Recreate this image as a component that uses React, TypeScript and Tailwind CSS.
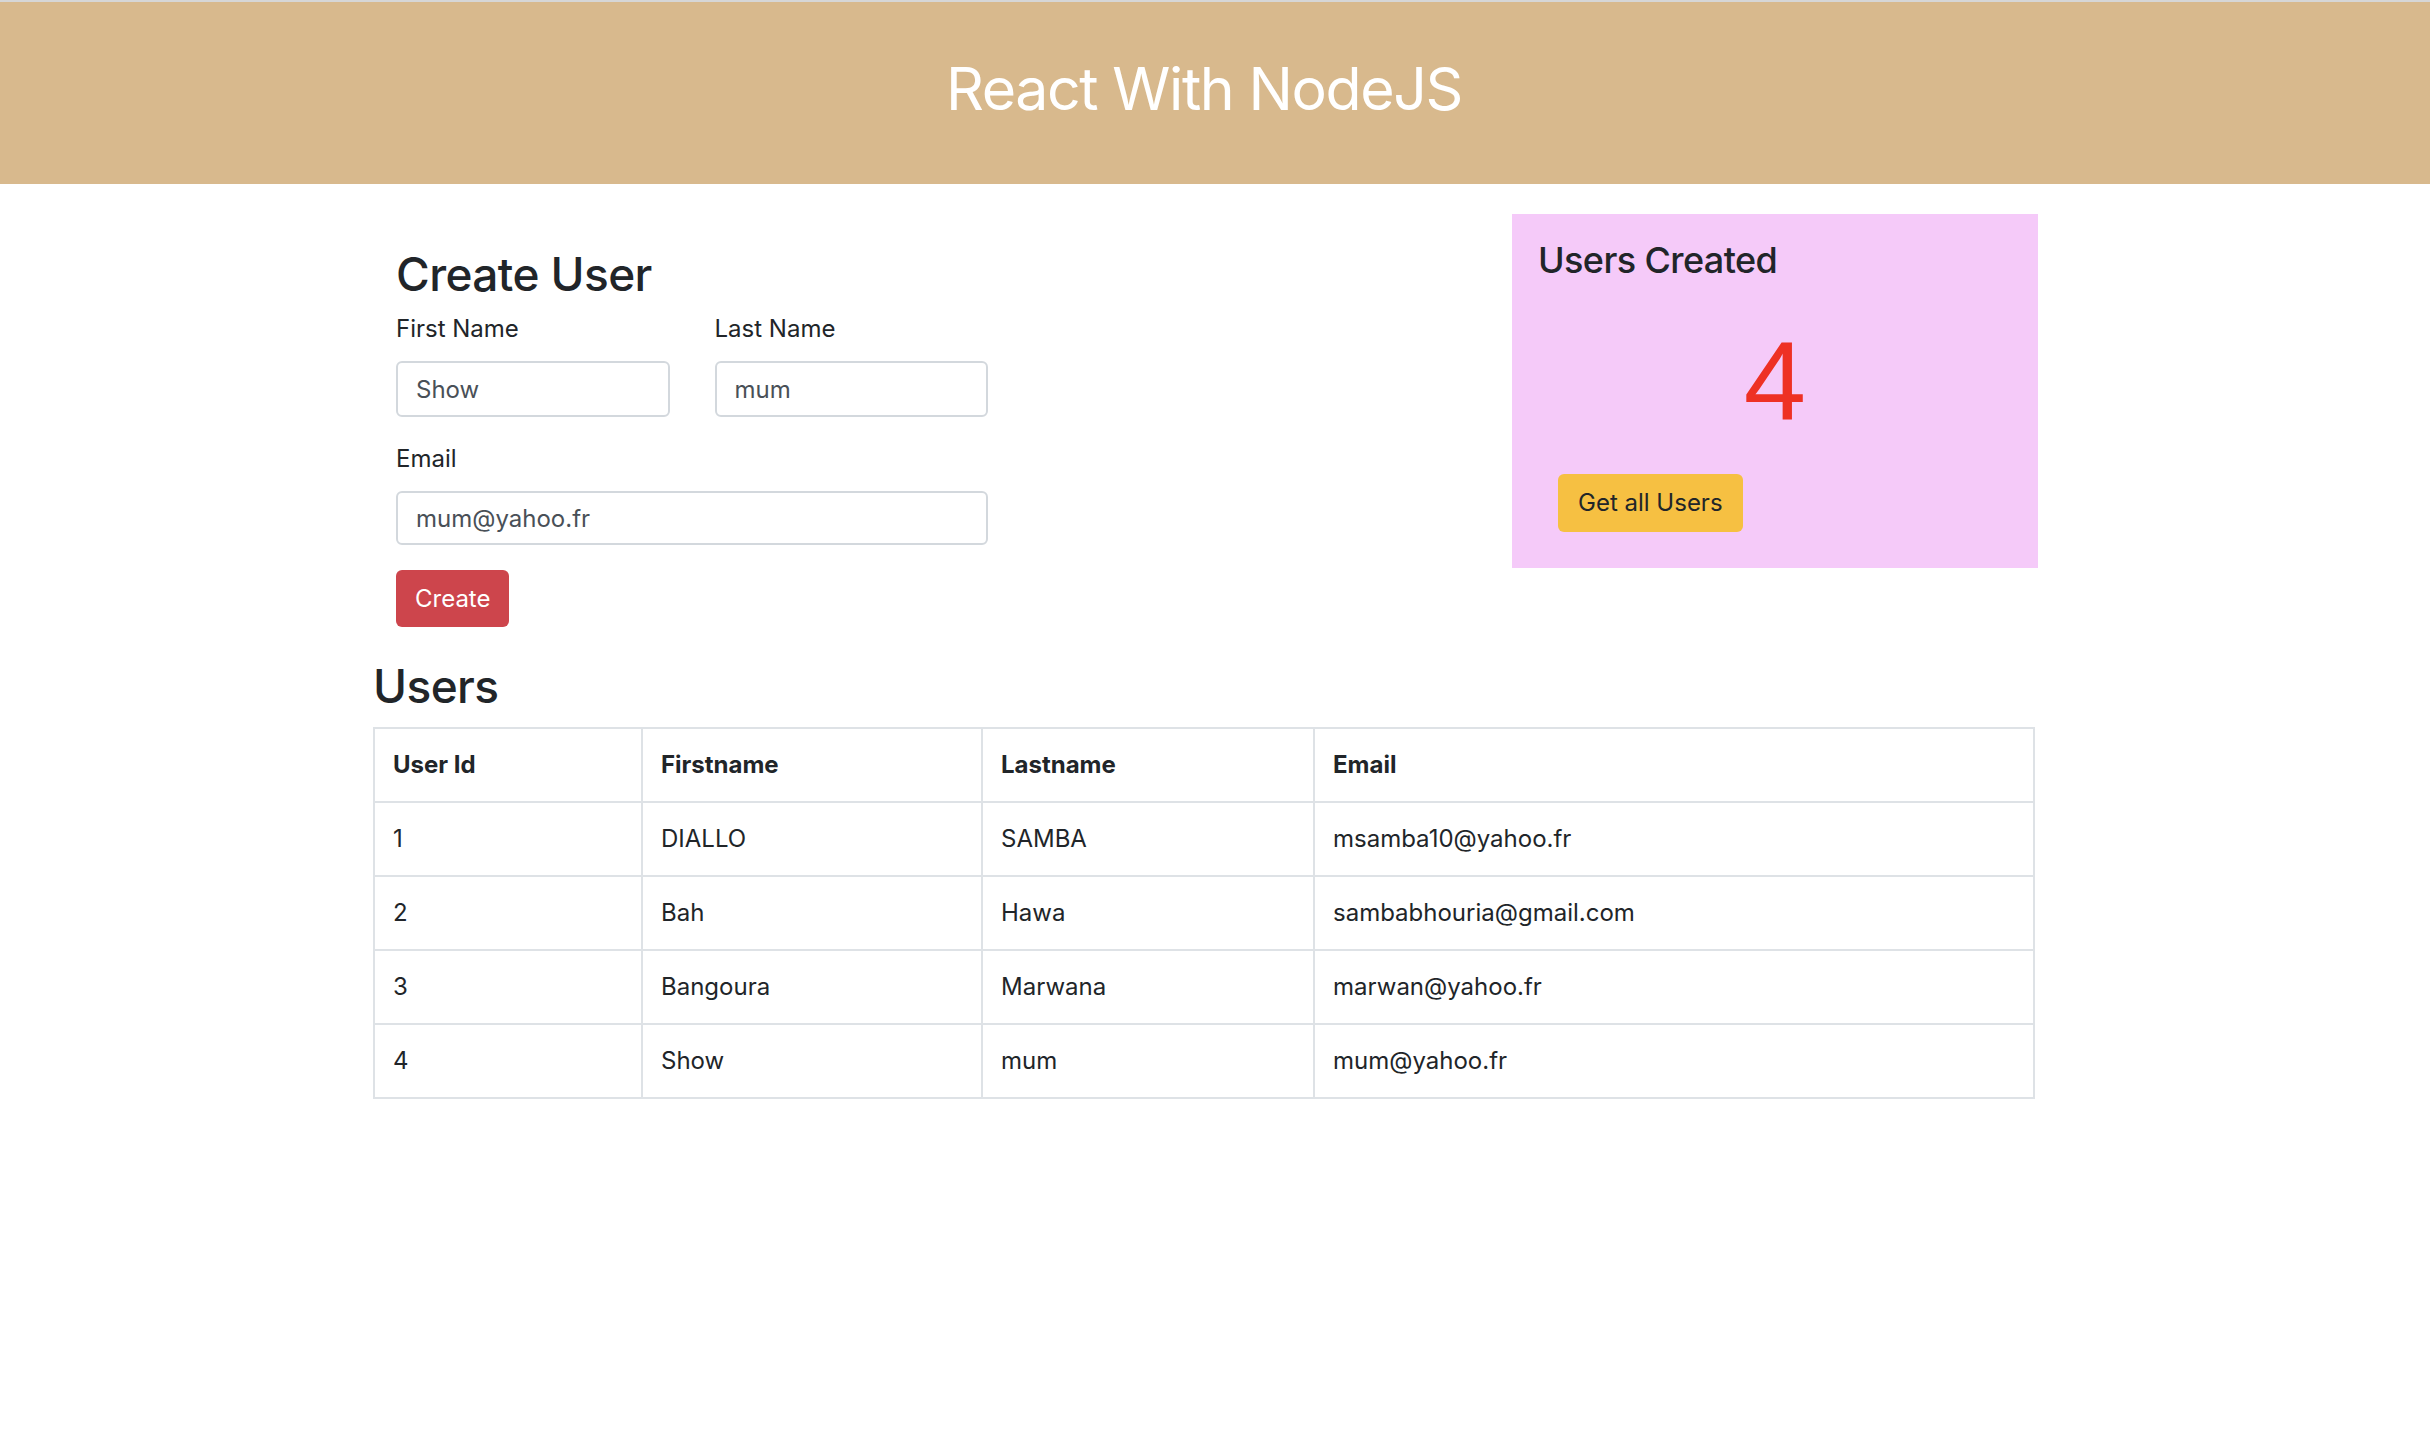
import React from 'react';

const users = [
    { id: 1, firstname: 'DIALLO', lastname: 'SAMBA', email: 'msamba10@yahoo.fr' },
    { id: 2, firstname: 'Bah', lastname: 'Hawa', email: 'sambabhouria@gmail.com' },
    { id: 3, firstname: 'Bangoura', lastname: 'Marwana', email: 'marwan@yahoo.fr' },
    { id: 4, firstname: 'Show', lastname: 'mum', email: 'mum@yahoo.fr' },
];

function Header() {
    return (
        <header className="border-t-2 border-[#d6d6d6] bg-[#d8b98d] h-[184px] flex items-center justify-center">
            <h1 className="text-white text-[59px] leading-[1.2] tracking-[-1.4px] font-normal mb-[8px] mr-[22px]">React With NodeJS</h1>
        </header>
    );
}

function CreateUser() {
    return (
        <form className="pl-[23px] pt-[33px] w-[615px]" onSubmit={(e) => e.preventDefault()}>
            <h2 className="text-[46px] leading-[1.2] font-medium tracking-[-0.6px]">Create User</h2>
            <div className="grid grid-cols-2 gap-x-[45px] mt-[9px]">
                <div>
                    <label className="block text-[24px] leading-[36px]">First Name</label>
                    <input
                        defaultValue="Show"
                        className="mt-[14px] w-full h-[56px] rounded-[6px] border-2 border-[#d3d8dd] px-[18px] text-[24px] text-[#495057] outline-none"
                    />
                </div>
                <div>
                    <label className="block text-[24px] leading-[36px]">Last Name</label>
                    <input
                        defaultValue="mum"
                        className="mt-[14px] w-full h-[56px] rounded-[6px] border-2 border-[#d3d8dd] px-[18px] text-[24px] text-[#495057] outline-none"
                    />
                </div>
            </div>
            <div className="mt-[24px]">
                <label className="block text-[24px] leading-[36px]">Email</label>
                <input
                    defaultValue="mum@yahoo.fr"
                    className="mt-[14px] w-full h-[54px] rounded-[6px] border-2 border-[#d3d8dd] px-[18px] text-[24px] text-[#495057] outline-none"
                />
            </div>
            <button className="mt-[25px] h-[57px] px-[19px] rounded-[6px] bg-[#cd454c] text-white text-[24px]">
                Create
            </button>
        </form>
    );
}

function UsersCreated() {
    return (
        <div className="w-[526px] -mr-[3px] bg-[#f5caf9] pt-[25px] pb-[36px] pl-[26px]">
            <h3 className="text-[36px] leading-[1.2] font-medium tracking-[-0.6px]">Users Created</h3>
            <div className="mt-[43px] pr-[26px] text-center font-['Liberation_Sans',Arial,sans-serif] text-[112px] leading-none text-[#ee3124]">
                4
            </div>
            <button className="mt-[37px] ml-[20px] h-[58px] px-[20px] rounded-[6px] bg-[#f6c042] text-[24px] text-[#212529]">
                Get all Users
            </button>
        </div>
    );
}

function UsersTable() {
    return (
        <div className="mt-[32px]">
            <h2 className="text-[46px] leading-[1.2] font-medium tracking-[-0.6px]">Users</h2>
            <table className="mt-[13px] w-[1662px] border-collapse border-2 border-[#dee2e6] text-[24px] table-fixed">
                <colgroup>
                    <col className="w-[268px]" />
                    <col className="w-[340px]" />
                    <col className="w-[332px]" />
                    <col />
                </colgroup>
                <thead>
                    <tr className="h-[74px]">
                        <th className="border-2 border-[#dee2e6] px-[18px] text-left font-bold">User Id</th>
                        <th className="border-2 border-[#dee2e6] px-[18px] text-left font-bold">Firstname</th>
                        <th className="border-2 border-[#dee2e6] px-[18px] text-left font-bold">Lastname</th>
                        <th className="border-2 border-[#dee2e6] px-[18px] text-left font-bold">Email</th>
                    </tr>
                </thead>
                <tbody>
                    {users.map((u) => (
                        <tr key={u.id} className="h-[74px]">
                            <td className="border-2 border-[#dee2e6] px-[18px]">{u.id}</td>
                            <td className="border-2 border-[#dee2e6] px-[18px]">{u.firstname}</td>
                            <td className="border-2 border-[#dee2e6] px-[18px]">{u.lastname}</td>
                            <td className="border-2 border-[#dee2e6] px-[18px]">{u.email}</td>
                        </tr>
                    ))}
                </tbody>
            </table>
        </div>
    );
}

export default function App() {
    return (
        <div className="min-h-screen bg-white font-['Inter',sans-serif] text-[#212529]">
            <Header />
            <main className="ml-[373px] w-[1662px]">
                <div className="flex justify-between items-start pt-[30px]">
                    <CreateUser />
                    <UsersCreated />
                </div>
                <UsersTable />
            </main>
        </div>
    );
}
